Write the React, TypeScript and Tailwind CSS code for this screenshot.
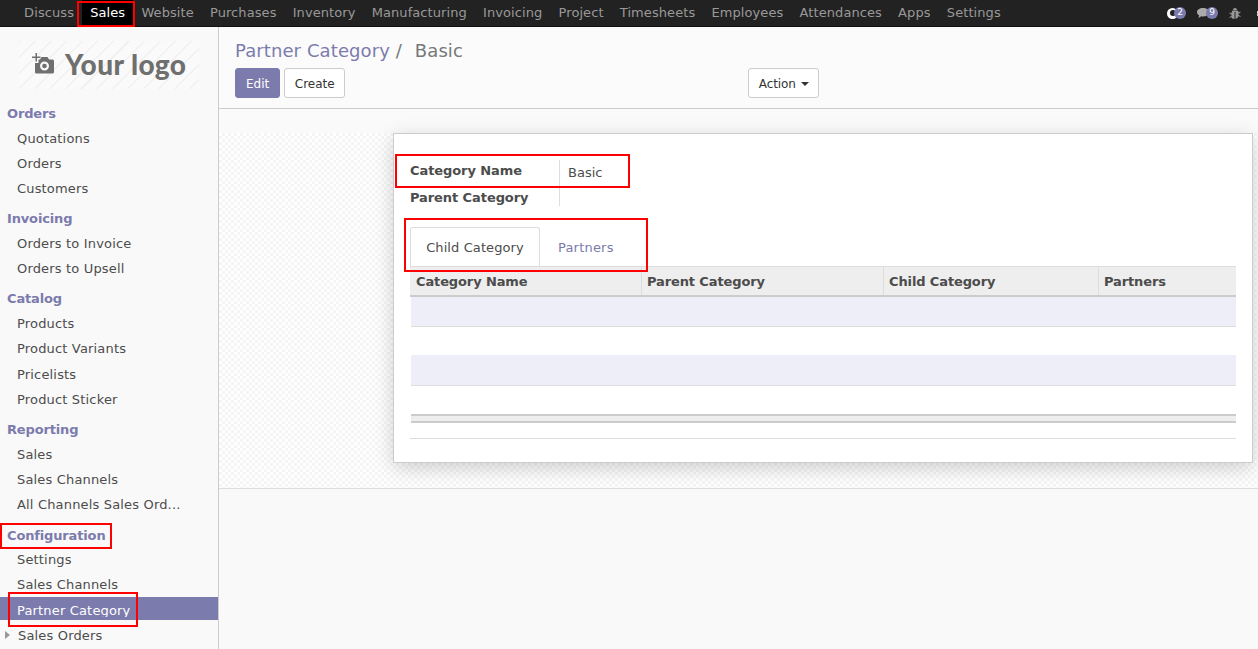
const font = "font-['DejaVu_Sans',sans-serif]";

const topMenu = ["Discuss", "Sales", "Website", "Purchases", "Inventory", "Manufacturing", "Invoicing", "Project", "Timesheets", "Employees", "Attendances", "Apps", "Settings"];

const sideMenu = [
  { title: "Orders", items: ["Quotations", "Orders", "Customers"] },
  { title: "Invoicing", items: ["Orders to Invoice", "Orders to Upsell"] },
  { title: "Catalog", items: ["Products", "Product Variants", "Pricelists", "Product Sticker"] },
  { title: "Reporting", items: ["Sales", "Sales Channels", "All Channels Sales Ord..."] },
  { title: "Configuration", items: ["Settings", "Sales Channels"] },
];

const columns = [
  { name: "Category Name", width: "w-[232px] pl-[6px]" },
  { name: "Parent Category", width: "w-[242px] pl-[5px]" },
  { name: "Child Category", width: "w-[215px] pl-[5px]" },
  { name: "Partners", width: "flex-1 pl-[5px]" },
];

function Navbar() {
  return (
    <header className="flex h-[27px] items-center justify-between border-b border-[#111] bg-[#222] text-[13px] tracking-[0.08px] text-[#999]">
      <nav className="flex h-full pl-4">
        {topMenu.map((item) => (
          <span key={item} className={`flex h-full items-center px-[8.1px] ${item === "Sales" ? "bg-black text-white" : ""}`}>
            {item}
          </span>
        ))}
      </nav>
      <div className="flex items-center">
        <span className="relative mr-[11px] flex h-[12px] w-[18px] items-center">
          <span className="h-[11px] w-[11px] rounded-full bg-white" />
          <span className="absolute left-[3px] top-[3px] h-[6px] w-[6px] rounded-full bg-[#222]" />
          <span className="absolute left-[7px] top-0 flex h-[12px] w-[12px] items-center justify-center rounded-full bg-[#7c7bad] text-[9px] tracking-normal text-white">2</span>
        </span>
        <span className="relative mr-[12px] flex h-[12px] w-[21px] items-center">
          <svg width="14" height="13" viewBox="0 0 14 13"><path d="M7 1c3.500 0 6 1.800 6 4.200S10.500 9.400 7 9.400c-.7 0-1.200 0-1.800-.2L2.500 11l.6-2.800C1.800 7.500 1 6.400 1 5.200 1 2.800 3.500 1 7 1z" fill="#aaa" /></svg>
          <span className="absolute left-[10px] top-0 flex h-[12px] w-[12px] items-center justify-center rounded-full bg-[#7c7bad] text-[9px] tracking-normal text-white">9</span>
        </span>
        <svg width="12" height="13" viewBox="0 0 12 13" fill="#999"><path d="M3.500 3.500h5l1 1v1l2-1v1l-2 1.200v1.300l2 1v1l-2-1-.5 1.500L6.500 12V5h-1v7l-2.500-.5L2.500 10l-2 1v-1l2-1V7.700L.5 6.500v-1l2 1v-1zM4 3c0-1.100.9-2 2-2s2 .9 2 2z" /></svg>
        <span className="ml-[16px] h-[5px] w-px bg-[#ccc]" />
      </div>
    </header>
  );
}

function Sidebar() {
  return (
    <aside className="w-[219px] shrink-0 overflow-hidden border-r border-[#ccc] bg-[#f9f9f9]">
      <div className="ml-[19px] mt-[14px] flex h-[48px] w-[180px] items-center gap-[11px] bg-[repeating-linear-gradient(135deg,#f1f1f1_0_1.500px,#fafafa_1.500px_11px)] pl-[13px] text-[#6f6f6f]">
        <svg width="22" height="21" viewBox="0 0 22 21" fill="#6f6f6f" className="-mt-[3px]">
          <path d="M3.500 0h1.500v3.500h3.500V5H5v3.500H3.500V5H0V3.500h3.500z" />
          <path fillRule="evenodd" d="M9.500 4h6l1.500 2.500h3.500A1.500 1.500 0 0 1 22 8v11a1.500 1.500 0 0 1-1.500 1.500h-16A1.500 1.500 0 0 1 3 19V10h3.500V6.500H8zM12.500 8.500a4.500 4.500 0 1 0 0 9 4.500 4.500 0 0 0 0-9zm0 2.200a2.300 2.300 0 1 1 0 4.600 2.300 2.300 0 0 1 0-4.600z" />
        </svg>
        <span className="-mt-[3px] font-['Lato',sans-serif] text-[28px] font-black leading-none tracking-[0.4px]">Your logo</span>
      </div>
      <div className="pt-[12.300px]">
        {sideMenu.map((group) => (
          <div key={group.title} className={group.title === "Reporting" ? "mb-[6px]" : group.title === "Configuration" ? "-mb-[1px]" : "mb-[5.300px]"}>
            <div className={`flex items-center pl-[7px] text-[13px] font-bold tracking-[-0.15px] text-[#7c7bad] ${group.title === "Configuration" ? "h-[24px]" : "h-[24.500px]"}`}>{group.title}</div>
            {group.items.map((item) => (
              <div key={item} className="flex h-[25.200px] items-center pl-[17px] text-[13px] tracking-[0.17px] text-[#4c4c4c]">
                {item}
              </div>
            ))}
          </div>
        ))}
        <div className="flex h-[23px] items-start bg-[#7c7bad] pl-[17px] pt-[5px] text-[13px] tracking-[0.17px] text-white">
          {/* descenders are cut off in the reference */}
          <span className="h-[15px] overflow-hidden leading-[18px]">Partner Category</span>
        </div>
        <div className="flex h-[31px] items-center text-[13px] tracking-[0.17px] text-[#4c4c4c]">
          <span className="ml-[5px] mr-[8px] h-0 w-0 border-y-[4px] border-l-[5px] border-y-transparent border-l-[#999]" />
          Sales Orders
        </div>
      </div>
    </aside>
  );
}

function Tabs() {
  return (
    <div className="flex h-[39px]">
      <div className="flex w-[130px] items-center justify-center rounded-t-[3px] border border-b-0 border-[#ddd] bg-white pt-[2px] tracking-[0.1px] text-[#4c4c4c]">Child Category</div>
      <div className="flex items-center pl-[18px] pt-[2px] tracking-[0.2px] text-[#7c7bad]">Partners</div>
    </div>
  );
}

function RecordTable() {
  return (
    <div>
      <div className="flex h-[31px] items-center border-t border-b-2 border-t-[#ddd] border-b-[#ccc] bg-[#eee] font-bold tracking-[-0.12px] text-[#4c4c4c]">
        {columns.map((col) => (
          <div key={col.name} className={`flex h-full items-center border-r border-[#ddd] pt-px last:border-r-0 ${col.width}`}>
            {col.name}
          </div>
        ))}
      </div>
      <div className="ml-px">
        <div className="h-[30px] border-b border-[#ddd] bg-[#eeeef8]" />
        <div className="h-[28px]" />
        <div className="h-[31px] border-b border-[#ddd] bg-[#eeeef8]" />
        <div className="h-[28px]" />
        <div className="h-[9px] border-y-2 border-[#ccc] bg-[#eee]" />
      </div>
      <div className="h-[16px] border-b border-[#ddd]" />
    </div>
  );
}

function FormSheet() {
  return (
    <div className="h-[330px] w-[860px] border border-[#ccc] bg-white px-4 pt-[26px] text-[13px] shadow-[0_5px_20px_-1px_rgba(0,0,0,0.2)]">
      <div className="grid w-[300px] grid-cols-[149px_1fr]">
        <div className="flex h-[25px] items-start font-bold leading-[21px] tracking-[-0.08px] text-[#4c4c4c]">Category Name</div>
        <div className="flex h-[25px] items-center border-l border-[#ddd] pl-[8px] text-[#4c4c4c]">Basic</div>
        <div className="flex h-[21px] items-end font-bold leading-[16px] tracking-[-0.08px] text-[#4c4c4c]">Parent Category</div>
        <div className="h-[21px] border-l border-[#ddd]" />
      </div>
      <div className="mt-[21px]">
        <Tabs />
        <RecordTable />
      </div>
    </div>
  );
}

export default function App() {
  return (
    <div className={`relative flex h-[649px] w-[1258px] flex-col overflow-hidden bg-white ${font}`}>
      <Navbar />
      <div className="flex min-h-0 flex-1">
        <Sidebar />
        <main className="flex min-w-0 flex-1 flex-col bg-[#f9f9f9]">
          <div className="h-[82px] shrink-0 border-b border-[#ccc] bg-[#fbfbfb] px-4 pt-[11px]">
            <div className="text-[18px] leading-[26px] tracking-[0.1px] text-[#7c7bad]">
              Partner Category <span className="text-[#777]">/</span> <span className="ml-[7px] text-[#777]">Basic</span>
            </div>
            <div className="mt-[4px] flex text-[12px]">
              <button className="h-[30px] rounded-[3px] border border-[#7c7bad] bg-[#7c7bad] px-[10px] pt-px text-white">Edit</button>
              <button className="ml-[4px] h-[30px] w-[61px] rounded-[3px] border border-[#ccc] bg-white pt-px text-[#333]">Create</button>
              <button className="ml-[403px] flex h-[30px] w-[71px] items-center justify-center gap-[5px] rounded-[3px] border border-[#ccc] bg-white pt-px tracking-[-0.1px] text-[#333]">
                Action
                <span className="h-0 w-0 border-x-[4px] border-t-[4px] border-x-transparent border-t-[#333]" />
              </button>
            </div>
          </div>
          <div className="h-[24px] shrink-0 bg-[#fafafa]" />
          <div className="flex h-[356px] shrink-0 justify-end border-b border-[#ddd] bg-[repeating-conic-gradient(#f5f5f5_0_25%,#ffffff_0_50%)] bg-[length:6px_6px] pr-[5px]">
            <FormSheet />
          </div>
        </main>
      </div>

      {/* Red annotation boxes drawn on the screenshot */}
      <div className="absolute left-[77px] top-px h-[26px] w-[58px] border-2 border-[#f00]" />
      <div className="absolute left-[395px] top-[154px] h-[34px] w-[235px] border-2 border-[#f00]" />
      <div className="absolute left-[404px] top-[218px] h-[54px] w-[244px] border-2 border-[#f00]" />
      <div className="absolute left-0 top-[523px] h-[26px] w-[112px] border-2 border-[#f00]" />
      <div className="absolute left-[8px] top-[592px] h-[35px] w-[130px] border-2 border-[#f00]" />
    </div>
  );
}
